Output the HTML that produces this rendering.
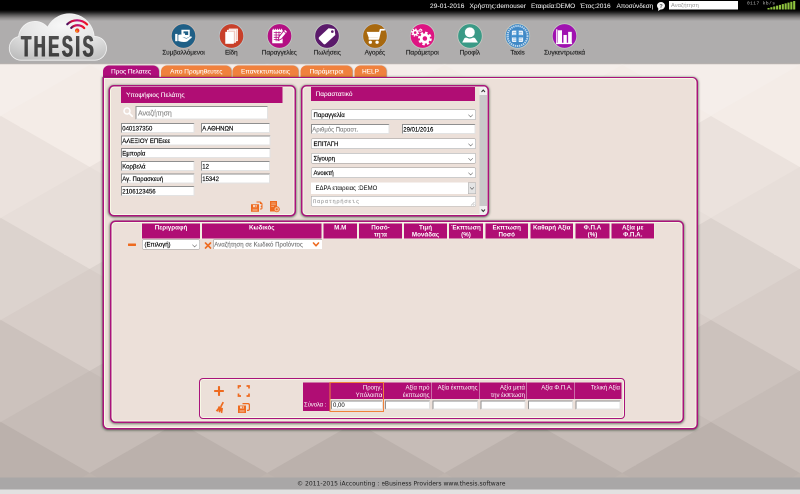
<!DOCTYPE html>
<html lang="el">
<head>
<meta charset="utf-8">
<title>iAccounting - THESIS</title>
<style>
html,body{margin:0;padding:0;width:800px;height:494px;overflow:hidden;background:#d8cfca;}
#stage{position:absolute;left:0;top:0;width:1600px;height:988px;transform:scale(.5);transform-origin:0 0;overflow:hidden;will-change:transform;
  font-family:"Liberation Sans","DejaVu Sans",sans-serif;font-size:12px;color:#000;}
#stage *{box-sizing:border-box;}
.in,.sel,.nav div{-webkit-text-stroke:.3px currentColor;}
#status,.title,.tab{-webkit-text-stroke:.15px currentColor;}
.abs{position:absolute;}
/* background */
#bg{left:0;top:126px;width:1600px;height:830px;background:linear-gradient(#f6efeb 0%,#efe6e1 20%,#e0d6d1 45%,#cfc5c0 70%,#bdb3ae 100%);}
#bgsvg{left:0;top:126px;width:1600px;height:830px;}
/* top */
#topblack{left:0;top:0;width:1600px;height:42px;background:linear-gradient(#000 0,#000 20px,#1c1c1c 24px,#5a5959 30px,#8e8c8c 36px,#afadad 42px);}
#header{left:0;top:42px;width:1600px;height:85px;background:#afadad;}
#hdrshadow{left:0;top:126px;width:1600px;height:4px;background:linear-gradient(rgba(120,115,112,.45),rgba(120,115,112,0));}
#status{left:0;top:0;width:1600px;height:24px;color:#e8e8e8;font-size:13px;line-height:24px;white-space:nowrap;}
#status span{position:absolute;top:0;}
#topsearch{left:1338px;top:2px;width:138px;height:17px;background:#fff;color:#999;font-size:11.5px;line-height:17px;padding-left:4px;}
/* nav */
.nav{position:absolute;top:46px;width:120px;text-align:center;font-size:13px;color:#222;white-space:nowrap;}
.nav svg{display:block;margin:0 auto;width:52px;height:52px;}
.nav div{margin-top:-1px;line-height:15px;letter-spacing:-.2px;}
/* tabs */
.tab{position:absolute;top:131px;height:24px;border-radius:12px 12px 0 0;background:#f0813d;color:#fff;font-size:13px;line-height:23px;text-align:center;white-space:nowrap;box-shadow:1px 0 2px rgba(90,80,70,.55);}
.tab.on{background:#b00d7b;}
/* panels */
.panel{position:absolute;background:#ece0d9;border:3px solid #a9137b;border-radius:11px;box-shadow:inset 0 0 0 2px #f7f9e6,0 1px 4px 1px rgba(30,60,35,.6);}
.title{position:absolute;background:#b00d74;color:#fff;font-size:13px;white-space:nowrap;}
.in{position:absolute;height:20px;background:#fff;border:2px solid;border-color:#8f8f8f #e3e3e3 #e3e3e3 #8f8f8f;font-size:12px;line-height:16px;padding-left:.5px;padding-top:1px;white-space:nowrap;overflow:hidden;color:#000;}
.sel{position:absolute;height:21px;background:#fff;border:1px solid #999;border-radius:3px;font-size:12px;line-height:20px;padding-left:4px;white-space:nowrap;overflow:hidden;color:#000;}
.sel:after{content:"";position:absolute;right:7px;top:6px;width:5.5px;height:5.5px;border-right:1.5px solid #505050;border-bottom:1.5px solid #505050;transform:rotate(45deg);}
.ph{color:#8a8a8a;}
.th{position:absolute;top:447px;height:30px;background:#b00d74;color:#fff;font-weight:bold;font-size:12.5px;line-height:14px;text-align:center;padding-top:1px;}
.tt{position:absolute;top:0;height:33px;color:#fff;font-size:12px;line-height:15px;text-align:right;padding:3px 3px 0 0;border-left:1px solid #e9c9dc;}
.ti{position:absolute;top:36px;height:18px;background:#fff;border:2px solid;border-color:#8f8f8f #e3e3e3 #e3e3e3 #8f8f8f;}
#footer{left:0;top:955px;width:1600px;height:24px;padding-left:5px;background:#a9a7a7;color:#222;font-size:12.1px;line-height:24px;text-align:center;font-family:"DejaVu Sans","Liberation Sans",sans-serif;}
#footer2{left:0;top:979px;width:1600px;height:9px;background:#e2e1e1;}
</style>
</head>
<body>
<div id="stage">
  <div id="bg" class="abs"></div>
  <svg id="bgsvg" class="abs" viewBox="0 0 1600 830" preserveAspectRatio="none" shape-rendering="geometricPrecision"><polygon points="-353.0,-98.0 -175.5,4.0 -353.0,106.0 -530.5,4.0" fill="rgb(245,238,234)"/><polygon points="-175.5,-200.0 2.0,-98.0 -175.5,4.0 -353.0,-98.0" fill="rgb(248,242,238)"/><polygon points="2.0,-98.0 179.5,4.0 2.0,106.0 -175.5,4.0" fill="rgb(245,238,234)"/><polygon points="179.5,-200.0 357.0,-98.0 179.5,4.0 2.0,-98.0" fill="rgb(248,242,238)"/><polygon points="357.0,-98.0 534.5,4.0 357.0,106.0 179.5,4.0" fill="rgb(245,238,234)"/><polygon points="534.5,-200.0 712.0,-98.0 534.5,4.0 357.0,-98.0" fill="rgb(248,242,238)"/><polygon points="712.0,-98.0 889.5,4.0 712.0,106.0 534.5,4.0" fill="rgb(245,238,234)"/><polygon points="889.5,-200.0 1067.0,-98.0 889.5,4.0 712.0,-98.0" fill="rgb(248,242,238)"/><polygon points="1067.0,-98.0 1244.5,4.0 1067.0,106.0 889.5,4.0" fill="rgb(245,238,234)"/><polygon points="1244.5,-200.0 1422.0,-98.0 1244.5,4.0 1067.0,-98.0" fill="rgb(248,242,238)"/><polygon points="1422.0,-98.0 1599.5,4.0 1422.0,106.0 1244.5,4.0" fill="rgb(245,238,234)"/><polygon points="1599.5,-200.0 1777.0,-98.0 1599.5,4.0 1422.0,-98.0" fill="rgb(248,242,238)"/><polygon points="1777.0,-98.0 1954.5,4.0 1777.0,106.0 1599.5,4.0" fill="rgb(245,238,234)"/><polygon points="1954.5,-200.0 2132.0,-98.0 1954.5,4.0 1777.0,-98.0" fill="rgb(248,242,238)"/><polygon points="-353.0,106.0 -175.5,208.0 -353.0,310.0 -530.5,208.0" fill="rgb(235,226,221)"/><polygon points="-175.5,4.0 2.0,106.0 -175.5,208.0 -353.0,106.0" fill="rgb(244,236,231)"/><polygon points="2.0,106.0 179.5,208.0 2.0,310.0 -175.5,208.0" fill="rgb(235,226,221)"/><polygon points="179.5,4.0 357.0,106.0 179.5,208.0 2.0,106.0" fill="rgb(244,236,231)"/><polygon points="357.0,106.0 534.5,208.0 357.0,310.0 179.5,208.0" fill="rgb(235,226,221)"/><polygon points="534.5,4.0 712.0,106.0 534.5,208.0 357.0,106.0" fill="rgb(244,236,231)"/><polygon points="712.0,106.0 889.5,208.0 712.0,310.0 534.5,208.0" fill="rgb(235,226,221)"/><polygon points="889.5,4.0 1067.0,106.0 889.5,208.0 712.0,106.0" fill="rgb(244,236,231)"/><polygon points="1067.0,106.0 1244.5,208.0 1067.0,310.0 889.5,208.0" fill="rgb(235,226,221)"/><polygon points="1244.5,4.0 1422.0,106.0 1244.5,208.0 1067.0,106.0" fill="rgb(244,236,231)"/><polygon points="1422.0,106.0 1599.5,208.0 1422.0,310.0 1244.5,208.0" fill="rgb(235,226,221)"/><polygon points="1599.5,4.0 1777.0,106.0 1599.5,208.0 1422.0,106.0" fill="rgb(244,236,231)"/><polygon points="1777.0,106.0 1954.5,208.0 1777.0,310.0 1599.5,208.0" fill="rgb(235,226,221)"/><polygon points="1954.5,4.0 2132.0,106.0 1954.5,208.0 1777.0,106.0" fill="rgb(244,236,231)"/><polygon points="-353.0,310.0 -175.5,412.0 -353.0,514.0 -530.5,412.0" fill="rgb(220,211,206)"/><polygon points="-175.5,208.0 2.0,310.0 -175.5,412.0 -353.0,310.0" fill="rgb(231,222,217)"/><polygon points="2.0,310.0 179.5,412.0 2.0,514.0 -175.5,412.0" fill="rgb(220,211,206)"/><polygon points="179.5,208.0 357.0,310.0 179.5,412.0 2.0,310.0" fill="rgb(231,222,217)"/><polygon points="357.0,310.0 534.5,412.0 357.0,514.0 179.5,412.0" fill="rgb(220,211,206)"/><polygon points="534.5,208.0 712.0,310.0 534.5,412.0 357.0,310.0" fill="rgb(231,222,217)"/><polygon points="712.0,310.0 889.5,412.0 712.0,514.0 534.5,412.0" fill="rgb(220,211,206)"/><polygon points="889.5,208.0 1067.0,310.0 889.5,412.0 712.0,310.0" fill="rgb(231,222,217)"/><polygon points="1067.0,310.0 1244.5,412.0 1067.0,514.0 889.5,412.0" fill="rgb(220,211,206)"/><polygon points="1244.5,208.0 1422.0,310.0 1244.5,412.0 1067.0,310.0" fill="rgb(231,222,217)"/><polygon points="1422.0,310.0 1599.5,412.0 1422.0,514.0 1244.5,412.0" fill="rgb(220,211,206)"/><polygon points="1599.5,208.0 1777.0,310.0 1599.5,412.0 1422.0,310.0" fill="rgb(231,222,217)"/><polygon points="1777.0,310.0 1954.5,412.0 1777.0,514.0 1599.5,412.0" fill="rgb(220,211,206)"/><polygon points="1954.5,208.0 2132.0,310.0 1954.5,412.0 1777.0,310.0" fill="rgb(231,222,217)"/><polygon points="-353.0,514.0 -175.5,616.0 -353.0,718.0 -530.5,616.0" fill="rgb(204,194,189)"/><polygon points="-175.5,412.0 2.0,514.0 -175.5,616.0 -353.0,514.0" fill="rgb(215,205,200)"/><polygon points="2.0,514.0 179.5,616.0 2.0,718.0 -175.5,616.0" fill="rgb(204,194,189)"/><polygon points="179.5,412.0 357.0,514.0 179.5,616.0 2.0,514.0" fill="rgb(215,205,200)"/><polygon points="357.0,514.0 534.5,616.0 357.0,718.0 179.5,616.0" fill="rgb(204,194,189)"/><polygon points="534.5,412.0 712.0,514.0 534.5,616.0 357.0,514.0" fill="rgb(215,205,200)"/><polygon points="712.0,514.0 889.5,616.0 712.0,718.0 534.5,616.0" fill="rgb(204,194,189)"/><polygon points="889.5,412.0 1067.0,514.0 889.5,616.0 712.0,514.0" fill="rgb(215,205,200)"/><polygon points="1067.0,514.0 1244.5,616.0 1067.0,718.0 889.5,616.0" fill="rgb(204,194,189)"/><polygon points="1244.5,412.0 1422.0,514.0 1244.5,616.0 1067.0,514.0" fill="rgb(215,205,200)"/><polygon points="1422.0,514.0 1599.5,616.0 1422.0,718.0 1244.5,616.0" fill="rgb(204,194,189)"/><polygon points="1599.5,412.0 1777.0,514.0 1599.5,616.0 1422.0,514.0" fill="rgb(215,205,200)"/><polygon points="1777.0,514.0 1954.5,616.0 1777.0,718.0 1599.5,616.0" fill="rgb(204,194,189)"/><polygon points="1954.5,412.0 2132.0,514.0 1954.5,616.0 1777.0,514.0" fill="rgb(215,205,200)"/><polygon points="-353.0,718.0 -175.5,820.0 -353.0,922.0 -530.5,820.0" fill="rgb(187,177,172)"/><polygon points="-175.5,616.0 2.0,718.0 -175.5,820.0 -353.0,718.0" fill="rgb(198,188,183)"/><polygon points="2.0,718.0 179.5,820.0 2.0,922.0 -175.5,820.0" fill="rgb(187,177,172)"/><polygon points="179.5,616.0 357.0,718.0 179.5,820.0 2.0,718.0" fill="rgb(198,188,183)"/><polygon points="357.0,718.0 534.5,820.0 357.0,922.0 179.5,820.0" fill="rgb(187,177,172)"/><polygon points="534.5,616.0 712.0,718.0 534.5,820.0 357.0,718.0" fill="rgb(198,188,183)"/><polygon points="712.0,718.0 889.5,820.0 712.0,922.0 534.5,820.0" fill="rgb(187,177,172)"/><polygon points="889.5,616.0 1067.0,718.0 889.5,820.0 712.0,718.0" fill="rgb(198,188,183)"/><polygon points="1067.0,718.0 1244.5,820.0 1067.0,922.0 889.5,820.0" fill="rgb(187,177,172)"/><polygon points="1244.5,616.0 1422.0,718.0 1244.5,820.0 1067.0,718.0" fill="rgb(198,188,183)"/><polygon points="1422.0,718.0 1599.5,820.0 1422.0,922.0 1244.5,820.0" fill="rgb(187,177,172)"/><polygon points="1599.5,616.0 1777.0,718.0 1599.5,820.0 1422.0,718.0" fill="rgb(198,188,183)"/><polygon points="1777.0,718.0 1954.5,820.0 1777.0,922.0 1599.5,820.0" fill="rgb(187,177,172)"/><polygon points="1954.5,616.0 2132.0,718.0 1954.5,820.0 1777.0,718.0" fill="rgb(198,188,183)"/><polygon points="-353.0,922.0 -175.5,1024.0 -353.0,1126.0 -530.5,1024.0" fill="rgb(186,176,172)"/><polygon points="-175.5,820.0 2.0,922.0 -175.5,1024.0 -353.0,922.0" fill="rgb(190,180,174)"/><polygon points="2.0,922.0 179.5,1024.0 2.0,1126.0 -175.5,1024.0" fill="rgb(186,176,172)"/><polygon points="179.5,820.0 357.0,922.0 179.5,1024.0 2.0,922.0" fill="rgb(190,180,174)"/><polygon points="357.0,922.0 534.5,1024.0 357.0,1126.0 179.5,1024.0" fill="rgb(186,176,172)"/><polygon points="534.5,820.0 712.0,922.0 534.5,1024.0 357.0,922.0" fill="rgb(190,180,174)"/><polygon points="712.0,922.0 889.5,1024.0 712.0,1126.0 534.5,1024.0" fill="rgb(186,176,172)"/><polygon points="889.5,820.0 1067.0,922.0 889.5,1024.0 712.0,922.0" fill="rgb(190,180,174)"/><polygon points="1067.0,922.0 1244.5,1024.0 1067.0,1126.0 889.5,1024.0" fill="rgb(186,176,172)"/><polygon points="1244.5,820.0 1422.0,922.0 1244.5,1024.0 1067.0,922.0" fill="rgb(190,180,174)"/><polygon points="1422.0,922.0 1599.5,1024.0 1422.0,1126.0 1244.5,1024.0" fill="rgb(186,176,172)"/><polygon points="1599.5,820.0 1777.0,922.0 1599.5,1024.0 1422.0,922.0" fill="rgb(190,180,174)"/><polygon points="1777.0,922.0 1954.5,1024.0 1777.0,1126.0 1599.5,1024.0" fill="rgb(186,176,172)"/><polygon points="1954.5,820.0 2132.0,922.0 1954.5,1024.0 1777.0,922.0" fill="rgb(190,180,174)"/><polygon points="-353.0,1126.0 -175.5,1228.0 -353.0,1330.0 -530.5,1228.0" fill="rgb(186,176,172)"/><polygon points="-175.5,1024.0 2.0,1126.0 -175.5,1228.0 -353.0,1126.0" fill="rgb(190,180,174)"/><polygon points="2.0,1126.0 179.5,1228.0 2.0,1330.0 -175.5,1228.0" fill="rgb(186,176,172)"/><polygon points="179.5,1024.0 357.0,1126.0 179.5,1228.0 2.0,1126.0" fill="rgb(190,180,174)"/><polygon points="357.0,1126.0 534.5,1228.0 357.0,1330.0 179.5,1228.0" fill="rgb(186,176,172)"/><polygon points="534.5,1024.0 712.0,1126.0 534.5,1228.0 357.0,1126.0" fill="rgb(190,180,174)"/><polygon points="712.0,1126.0 889.5,1228.0 712.0,1330.0 534.5,1228.0" fill="rgb(186,176,172)"/><polygon points="889.5,1024.0 1067.0,1126.0 889.5,1228.0 712.0,1126.0" fill="rgb(190,180,174)"/><polygon points="1067.0,1126.0 1244.5,1228.0 1067.0,1330.0 889.5,1228.0" fill="rgb(186,176,172)"/><polygon points="1244.5,1024.0 1422.0,1126.0 1244.5,1228.0 1067.0,1126.0" fill="rgb(190,180,174)"/><polygon points="1422.0,1126.0 1599.5,1228.0 1422.0,1330.0 1244.5,1228.0" fill="rgb(186,176,172)"/><polygon points="1599.5,1024.0 1777.0,1126.0 1599.5,1228.0 1422.0,1126.0" fill="rgb(190,180,174)"/><polygon points="1777.0,1126.0 1954.5,1228.0 1777.0,1330.0 1599.5,1228.0" fill="rgb(186,176,172)"/><polygon points="1954.5,1024.0 2132.0,1126.0 1954.5,1228.0 1777.0,1126.0" fill="rgb(190,180,174)"/></svg>
  <div id="topblack" class="abs"></div>
  <div id="header" class="abs"></div>
  <div id="hdrshadow" class="abs"></div>

  <!-- tabs -->
  <div class="tab on" style="left:206px;width:112px;">Προς Πελατες</div>
  <div class="tab" style="left:322px;width:141px;">Απο Προμηθευτες</div>
  <div class="tab" style="left:465px;width:132px;">Επανεκτυπωσεις</div>
  <div class="tab" style="left:601px;width:104px;">Παράμετροι</div>
  <div class="tab" style="left:709px;width:64px;">HELP</div>

  <!-- outer panel -->
  <div class="panel" id="outer" style="left:205px;top:154px;width:1191px;height:705px;border-radius:0 11px 11px 11px;border-top-width:2px;"></div>

  <!-- customer panel -->
  <div class="panel" id="cust" style="left:217px;top:170px;width:375px;height:263px;">
  </div>
  <div class="title" style="left:242px;top:174px;width:323px;height:32px;line-height:32px;padding-left:10px;">Υποψήφιος Πελάτης</div>
  <svg class="abs" style="left:245px;top:213px;width:22px;height:22px;" viewBox="0 0 22 22"><circle cx="9" cy="9" r="6" fill="none" stroke="#fff" stroke-width="3"/><path d="M13.5 13.5 L19.5 19.5" stroke="#fff" stroke-width="3.4" stroke-linecap="round"/></svg>
  <div class="in ph" style="left:271px;top:212px;width:265px;height:27px;font-size:14px;line-height:22px;padding-left:3px;">Αναζήτηση</div>
  <div class="in" style="left:242px;top:246px;width:147px;">040137350</div>
  <div class="in" style="left:402px;top:246px;width:138px;">Α ΑΘΗΝΩΝ</div>
  <div class="in" style="left:242px;top:271px;width:299px;">ΑΛΕΞΙΟΥ ΕΠΕεεε</div>
  <div class="in" style="left:242px;top:296px;width:299px;">Εμπορία</div>
  <div class="in" style="left:242px;top:322px;width:147px;">Κορβελά</div>
  <div class="in" style="left:402px;top:322px;width:138px;">12</div>
  <div class="in" style="left:242px;top:347px;width:147px;">Αγ. Παρασκευή</div>
  <div class="in" style="left:402px;top:347px;width:138px;">15342</div>
  <div class="in" style="left:242px;top:372px;width:147px;">2106123456</div>


  <!-- customer panel icons -->
  <svg class="abs" style="left:501px;top:402px;width:26px;height:22px;" viewBox="0 0 26 22"><path d="M12 1 H20 L24 5 V14 Q24 17 21 17 H19 V15 H21 Q22 15 22 14 V6 H19 V3 H12Z" fill="#ee6a1f"/><path d="M20 11 L23 8 V14 Z" fill="#ee6a1f"/><path d="M1 6.5 H17 V21.5 H1Z" fill="#ee6a1f"/><rect x="5" y="8" width="8" height="4.5" fill="#f6d4c0"/><rect x="9.6" y="8.6" width="2.2" height="3.3" fill="#ee6a1f"/><rect x="4" y="15.5" width="10" height="4.5" fill="#f29a66"/></svg>
  <svg class="abs" style="left:539px;top:401px;width:22px;height:24px;" viewBox="0 0 22 24"><path d="M1 1 H15 V22 H1Z" fill="#ee6a1f"/><path d="M3.5 5 H12.5 M3.5 8.5 H12.5 M3.5 12 H9" stroke="#f4b890" stroke-width="1.4"/><circle cx="14.5" cy="17.5" r="5.3" fill="#f4b890" stroke="#ee6a1f" stroke-width="1.6"/><circle cx="14.5" cy="17.5" r="2" fill="#ee6a1f"/></svg>

  <!-- document panel -->
  <div class="panel" id="doc" style="left:602px;top:170px;width:376px;height:263px;"></div>
  <div class="title" style="left:622px;top:174px;width:328px;height:28px;line-height:28px;padding-left:9px;">Παραστατικό</div>
  <div class="sel" style="left:622px;top:219px;width:330px;">Παραγγελία</div>
  <div class="in ph" style="left:622px;top:248px;width:157px;height:20px;">Αριθμός Παραστ.</div>
  <div class="in" style="left:804px;top:248px;width:147px;height:20px;">29/01/2016</div>
  <div class="sel" style="left:622px;top:277px;width:330px;">ΕΠΙΤΑΓΗ</div>
  <div class="sel" style="left:622px;top:306px;width:330px;">Σίγουρη</div>
  <div class="sel" style="left:622px;top:335px;width:330px;">Ανοικτή</div>
  <div class="abs" style="left:622px;top:365px;width:330px;height:23px;background:#fff;font-size:12px;line-height:23px;padding-left:9px;">ΕΔΡΑ εταιρειας :DEMO</div>
  <div class="abs" style="left:936px;top:365px;width:16px;height:23px;background:#e4e4e4;border:1px solid #adadad;"><div style="position:absolute;left:4px;top:6px;width:6px;height:6px;border-right:1.6px solid #444;border-bottom:1.6px solid #444;transform:rotate(45deg);"></div></div>
  <div class="in ph" style="left:622px;top:392px;width:330px;height:21px;font-family:'Liberation Mono','DejaVu Sans Mono',monospace;font-size:11px;letter-spacing:1.2px;line-height:18px;padding-left:3px;color:#a6a6a6;border-width:1px;border-radius:3px;border-color:#9a9a9a #b8b8b8 #b8b8b8 #9a9a9a;">Παρατηρήσεις</div>
  <svg class="abs" style="left:940px;top:402px;width:10px;height:10px;" viewBox="0 0 10 10"><path d="M9 2 L2 9 M9 6 L6 9" stroke="#b5b5b5" stroke-width="1.2"/></svg>
  <!-- scrollbar -->
  <div class="abs" style="left:959px;top:173px;width:15px;height:257px;background:#f1f1f1;border-radius:0 6px 6px 0;"></div>
  <div class="abs" style="left:959px;top:190px;width:15px;height:222px;background:#c9c9c9;"></div>
  <svg class="abs" style="left:959px;top:173px;width:15px;height:17px;" viewBox="0 0 15 17"><path d="M4 11 L7.5 7 L11 11" fill="none" stroke="#333" stroke-width="2"/></svg>
  <svg class="abs" style="left:959px;top:413px;width:15px;height:17px;" viewBox="0 0 15 17"><path d="M4 6 L7.5 10 L11 6" fill="none" stroke="#333" stroke-width="2"/></svg>

  <!-- grid panel -->
  <div class="panel" id="grid" style="left:220px;top:441px;width:1148px;height:405px;"></div>
  <div class="abs" style="left:283px;top:446px;width:1026px;height:32px;background:#f3eee2;"></div>
  <div class="th" style="left:284px;width:116px;">Περιγραφή</div>
  <div class="th" style="left:404px;width:239px;">Κωδικός</div>
  <div class="th" style="left:647px;width:67px;">Μ.Μ</div>
  <div class="th" style="left:718px;width:86px;">Ποσό-<br>τητα</div>
  <div class="th" style="left:808px;width:86px;">Τιμή<br>Μονάδας</div>
  <div class="th" style="left:898px;width:68px;">Έκπτωση<br>(%)</div>
  <div class="th" style="left:971px;width:85px;">Εκπτωση<br>Ποσό</div>
  <div class="th" style="left:1061px;width:85px;">Καθαρή Αξία</div>
  <div class="th" style="left:1151px;width:68px;">Φ.Π.Α<br>(%)</div>
  <div class="th" style="left:1223px;width:85px;">Αξία με<br>Φ.Π.Α.</div>
  <!-- row -->
  <div class="abs" style="left:256px;top:487px;width:16px;height:5px;background:#ee6a1f;border-radius:1px;"></div>
  <div class="sel" style="left:284px;top:479px;width:116px;height:20px;line-height:18px;">(Επιλογή)</div>
  <svg class="abs" style="left:409px;top:484px;width:14px;height:14px;" viewBox="0 0 14 14"><path d="M2 2 L12 12 M12 2 L2 12" stroke="#ee6a1f" stroke-width="3.2" stroke-linecap="round"/></svg>
  <div class="in ph" style="left:427px;top:479px;width:217px;height:19px;border-width:1px 0 0 1px;border-color:#8f8f8f;font-size:12px;line-height:16px;letter-spacing:.1px;color:#7a7a7a;">Αναζήτηση σε Κωδικό Προϊόντος</div>
  <svg class="abs" style="left:624px;top:483px;width:16px;height:12px;" viewBox="0 0 16 12"><path d="M3 3 L8 8.5 L13 3" fill="none" stroke="#ee6a1f" stroke-width="3.2" stroke-linecap="round" stroke-linejoin="round"/></svg>

  <!-- bottom toolbar -->
  <div class="abs" id="tool" style="left:398px;top:756px;width:852px;height:82px;border:2px solid #a9137b;border-radius:8px;box-shadow:inset 0 0 0 2px #f7f9e6;"></div>
  <!-- icons -->
  <svg class="abs" style="left:428px;top:772px;width:20px;height:20px;" viewBox="0 0 20 20"><path d="M10 2 V18 M2 10 H18" stroke="#ee6a1f" stroke-width="4.2" stroke-linecap="round"/></svg>
  <svg class="abs" style="left:475px;top:770px;width:25px;height:24px;" viewBox="0 0 25 24"><path d="M2 7 V2 H7 M18 2 H23 V7 M23 17 V22 H18 M7 22 H2 V17" fill="none" stroke="#ee6a1f" stroke-width="3.4"/></svg>
  <svg class="abs" style="left:429px;top:803px;width:22px;height:24px;" viewBox="0 0 22 24"><path d="M16 0.5 L19 2 L14 11.5 L11 10 Z" fill="#ee6a1f"/><path d="M8.5 9 L17 13.5 L15.5 23.5 L12.5 22.5 L12.5 18.5 L10.5 22 L8 21 L9 17 L6 20.5 L2.5 18.5 Q7 14 8.5 9Z" fill="#ee6a1f"/></svg>
  <svg class="abs" style="left:475px;top:805px;width:26px;height:22px;" viewBox="0 0 26 22"><path d="M10 1 H21 Q25 1 25 5 V13 Q25 17 21 17 H19 V14.5 H21 Q22.5 14.5 22.5 13 V5 Q22.5 3.5 21 3.5 H10Z" fill="#ee6a1f"/><path d="M1 6 H17 V21 H1Z" fill="#ee6a1f"/><rect x="5" y="7.5" width="8" height="4.5" fill="#f3d9c8"/><rect x="9.5" y="8" width="2.2" height="3.4" fill="#ee6a1f"/><rect x="4" y="15" width="10" height="4.5" fill="#f19a66"/></svg>

  <!-- totals table -->
  <div class="abs" id="tot" style="left:606px;top:765px;width:637px;height:57px;">
    <div class="abs" style="left:0;top:0;width:637px;height:33px;background:#b00d74;"></div>
    <div class="abs" style="left:0;top:33px;width:53px;height:24px;background:#b00d74;color:#fff;font-size:12px;line-height:22px;padding-left:2px;white-space:nowrap;letter-spacing:-.2px;">Σύνολα :</div>
    <div class="tt" style="left:53px;width:108px;border-left:0;">Προηγ.<br>Υπόλοιπο</div>
    <div class="tt" style="left:161px;width:95px;">Αξία πρό<br>έκπτωσης</div>
    <div class="tt" style="left:256px;width:96px;">Αξία έκπτωσης</div>
    <div class="tt" style="left:352px;width:95px;">Αξία μετά<br>την έκπτωση</div>
    <div class="tt" style="left:447px;width:95px;">Αξία Φ.Π.Α.</div>
    <div class="tt" style="left:542px;width:95px;">Τελική Αξία</div>
    <div class="ti" style="left:56px;width:103px;font-size:12px;line-height:15px;padding-left:2px;">0,00</div>
    <div class="ti" style="left:164px;width:90px;"></div>
    <div class="ti" style="left:259px;width:91px;"></div>
    <div class="ti" style="left:355px;width:90px;"></div>
    <div class="ti" style="left:450px;width:90px;"></div>
    <div class="ti" style="left:545px;width:90px;"></div>
    <div class="abs" style="left:53px;top:-1px;width:109px;height:60px;border:2px solid #f0823a;"></div>
  </div>


  <!-- logo -->
  <svg class="abs" id="logo" style="left:0;top:0;width:240px;height:130px;" viewBox="0 0 240 130">
    <defs>
      <radialGradient id="cg" cx="0.55" cy="0.25" r="0.85"><stop offset="0" stop-color="#f8f8f8"/><stop offset=".5" stop-color="#e4e4e4"/><stop offset="1" stop-color="#bdbdbd"/></radialGradient>
      <linearGradient id="wg" x1="0" y1="0" x2="1" y2="0"><stop offset="0" stop-color="#4a1060"/><stop offset=".25" stop-color="#e0103a"/><stop offset=".5" stop-color="#b01080"/><stop offset=".75" stop-color="#e01050"/><stop offset="1" stop-color="#f01418"/></linearGradient>
      <filter id="thick" x="-5%" y="-5%" width="110%" height="110%"><feOffset in="SourceGraphic" dx="-1.3" dy="0" result="a"/><feOffset in="SourceGraphic" dx="1.3" dy="0" result="b"/><feMerge><feMergeNode in="a"/><feMergeNode in="b"/><feMergeNode in="SourceGraphic"/></feMerge></filter><linearGradient id="tg" x1="0" y1="0" x2="0" y2="1"><stop offset="0" stop-color="#555"/><stop offset="1" stop-color="#383838"/></linearGradient>
    </defs>
    <g transform="scale(2)" fill="url(#cg)" stroke="#f4f4f4" stroke-width=".8">
      <path d="M21.5 60.2 A12 12 0 0 1 18.6 36.5 A16.5 16.5 0 0 1 47.6 27.2 A24.7 24.7 0 0 1 94.2 36.4 A11.9 11.9 0 1 1 95 60.2 Z"/>
    </g>
    <g filter="url(#thick)"><text transform="translate(42.2,113) scale(.56,1)" font-family="Liberation Sans, sans-serif" font-weight="bold" font-size="59" fill="url(#tg)" letter-spacing="9.2">THESIS</text></g>
    <g fill="none" stroke="url(#wg)" stroke-width="4.4" stroke-linecap="round">
      <path d="M142.5 55.8 A18.2 18.2 0 0 1 168.5 56.2"/>
      <path d="M134.6 48.4 A28.4 28.4 0 0 1 174.2 49"/>
    </g>
    <circle cx="154.4" cy="61.2" r="4.4" fill="#ee3a24"/><circle cx="153.2" cy="62.6" r="2.2" fill="#f6a21c"/>
  </svg>
  <!-- nav -->
  <div class="nav" style="left:307px;"><svg viewBox="0 0 50 50"><circle cx="25" cy="25" r="23.6" fill="#1f5f86" stroke="#c9b8b0" stroke-width="1.6"/><g transform="translate(1 1)"><path d="M8 20 H12.5 V34 H8Z" fill="#fff"/><path d="M14 22 Q18 20 22 22 L27 24 Q29 25 28 27 L22 27 L30 29 L37 25 Q40 24 40 27 L31 34.5 Q24 37 14 33.5Z" fill="#fff"/><path d="M20 12 H36 V25 L30 28 L20 25Z" fill="#fff"/><path d="M24 15 H33 V22 H27 V19 H24Z" fill="#1f5f86"/></g></svg><div>Συμβαλλόμενοι</div></div>
  <div class="nav" style="left:402.5px;"><svg viewBox="0 0 50 50"><circle cx="25" cy="25" r="23.6" fill="#c8402a" stroke="#b9c6cc" stroke-width="1.6"/><g transform="translate(1 1)"><path d="M19.5 10.5 H35.5 V33 H19.5Z" fill="#f0c9c1" stroke="#fff" stroke-width="1.5"/><path d="M16 13 H32 V36 H16Z" fill="#f0c9c1" stroke="#fff" stroke-width="1.5"/><path d="M12 16 H28.5 V39 H12Z" fill="#fff"/></g></svg><div>Είδη</div></div>
  <div class="nav" style="left:498.5px;"><svg viewBox="0 0 50 50"><circle cx="25" cy="25" r="23.6" fill="#b40f83" stroke="#c4c9c2" stroke-width="1.6"/><g transform="translate(1 1)"><path d="M10 12 H30 V38 H10Z" fill="#fff"/><path d="M13 17.5 H27 M13 22 H27 M13 26.5 H27 M13 31 H24 M17.5 15 V34 M23 15 V34" stroke="#b40f83" stroke-width="1.5"/><path d="M12 10 V14 M16 10 V14 M20 10 V14 M24 10 V14 M28 10 V14" stroke="#fff" stroke-width="1.6"/><path d="M34.5 11 L39.5 16 L28 29.5 L21 32.5 L23.5 25Z" fill="#fff" stroke="#b40f83" stroke-width="1.7"/><path d="M32 14.5 L36.5 19" stroke="#b40f83" stroke-width="1.4"/></g></svg><div>Παραγγελίες</div></div>
  <div class="nav" style="left:594.4px;"><svg viewBox="0 0 50 50"><circle cx="25" cy="25" r="23.6" fill="#5b1a6b" stroke="#c4c9c2" stroke-width="1.6"/><g transform="translate(1 1)"><path d="M27 9 L38.5 10.5 L40 22 L21 39.5 Q19 41 17 39 L8.5 30 Q7 28 9 26Z" fill="#fff"/><circle cx="34.3" cy="15.5" r="2.5" fill="#5b1a6b"/></g></svg><div>Πωλήσεις</div></div>
  <div class="nav" style="left:689.5px;"><svg viewBox="0 0 50 50"><circle cx="25" cy="25" r="23.6" fill="#a8690f" stroke="#b9bcc6" stroke-width="1.6"/><g transform="translate(1 1)"><g transform="translate(48 0) scale(-1 1)"><path d="M6.5 12 H13.5 L17.5 29.5 H35" fill="none" stroke="#fff" stroke-width="3.2" stroke-linejoin="round" stroke-linecap="round"/><path d="M15 16 H40 L36 27.5 H17.6Z" fill="#fff"/><circle cx="20" cy="36" r="3.2" fill="#fff"/><circle cx="33" cy="36" r="3.2" fill="#fff"/></g></g></svg><div>Αγορές</div></div>
  <div class="nav" style="left:784.5px;"><svg viewBox="0 0 50 50"><circle cx="25" cy="25" r="23.6" fill="#de1482" stroke="#c4c9c2" stroke-width="1.6"/><g transform="translate(1 1)"><g transform="translate(-1 -1)"><circle cx="10.9" cy="18.4" r="6.5" fill="none" stroke="#fff" stroke-width="2.6" stroke-dasharray="2.8 2.305"/><circle cx="10.9" cy="18.4" r="5.6" fill="#fff"/><circle cx="10.9" cy="18.4" r="2.5" fill="#de1482"/><circle cx="21.4" cy="14" r="2.8" fill="none" stroke="#fff" stroke-width="1.4" stroke-dasharray="1.5 1.43"/><circle cx="21.4" cy="14" r="2.4" fill="#fff"/><circle cx="21.4" cy="14" r="1.1" fill="#de1482"/><circle cx="29.6" cy="29.8" r="11.3" fill="none" stroke="#fff" stroke-width="3.8" stroke-dasharray="4.8 4.075"/><circle cx="29.6" cy="29.8" r="9.8" fill="#fff"/><circle cx="29.6" cy="29.8" r="4.3" fill="#de1482"/></g></g></svg><div>Παράμετροι</div></div>
  <div class="nav" style="left:879.5px;"><svg viewBox="0 0 50 50"><circle cx="25" cy="25" r="23.6" fill="#3a9a86" stroke="#c4c9c2" stroke-width="1.6"/><g transform="translate(1 1)"><g transform="translate(-1 -1)"><path d="M10 37.4 L14.2 29.4 Q16 27.6 19 28.4 Q24.5 31.5 30 28.4 Q33 27.6 34.8 29.4 L40.3 37.4 Z" fill="#fff"/><circle cx="24.6" cy="18" r="10" fill="#fff" stroke="#3a9a86" stroke-width="0.8"/></g></g></svg><div>Προφίλ</div></div>
  <div class="nav" style="left:975px;"><svg viewBox="0 0 50 50"><circle cx="25" cy="25" r="23.6" fill="#4189c6" stroke="#c4c9c2" stroke-width="1.6"/><g transform="translate(1 1)"><circle cx="24" cy="24" r="19.3" fill="none" stroke="#bcd8ef" stroke-width="3.8" stroke-dasharray="2.6 1.5"/><rect x="13.2" y="13.6" width="21.6" height="22" rx="2.2" fill="#edf4fb"/><path d="M15 17.5 H21 M27 17.5 H33 M15 20.5 H21 M27 20.5 H33 M15 29.5 H21 M27 29.5 H33 M15 32.5 H21 M27 32.5 H33" stroke="#8dbbe2" stroke-width="1.3"/><path d="M24 13.6 V35.6 M13.2 24.6 H34.8" stroke="#3f8fce" stroke-width="4.8"/></g></svg><div>Taxis</div></div>
  <div class="nav" style="left:1069px;"><svg viewBox="0 0 50 50"><circle cx="25" cy="25" r="23.6" fill="#a012b0" stroke="#c4c9c2" stroke-width="1.6"/><g transform="translate(1 1)"><rect x="8" y="11" width="2.2" height="28.6" fill="#fff"/><rect x="8" y="37" width="30.6" height="2.6" fill="#fff"/><rect x="11.2" y="13" width="8" height="24.5" fill="#fff"/><rect x="22" y="22" width="6.4" height="15.5" fill="#fff"/><rect x="31" y="16" width="7" height="21.5" fill="#fff"/></g></svg><div>Συγκεντρωτικά</div></div>

  <!-- status bar -->
  <div id="status" class="abs">
    <span style="left:860px;letter-spacing:.25px;">29-01-2016</span>
    <span style="left:939px;letter-spacing:.1px;">Χρήστης:demouser</span>
    <span style="left:1062px;letter-spacing:-.15px;">Εταιρεία:DEMO</span>
    <span style="left:1160px;">Έτος:2016</span>
    <span style="left:1233px;letter-spacing:-.15px;">Αποσύνδεση</span>
  </div>
  <svg class="abs" style="left:1313px;top:3px;width:18px;height:20px;" viewBox="0 0 18 20"><ellipse cx="9" cy="8.5" rx="8" ry="7.5" fill="#f4f4f4"/><path d="M4 13 L3 19 L10 15Z" fill="#f4f4f4"/><text x="9" y="12.5" font-family="Liberation Sans, sans-serif" font-size="11" font-weight="bold" fill="#555" text-anchor="middle">?</text></svg>
  <div id="topsearch" class="abs">Αναζήτηση</div>
  <div class="abs" style="left:1494px;top:3px;font-size:9px;color:#bdbdbd;letter-spacing:.9px;font-family:'Liberation Mono',monospace;line-height:9px;white-space:nowrap;">0117 kb/s</div>
  <svg class="abs" style="left:1535px;top:2px;width:57px;height:18px;" viewBox="0 0 57 18">
    <g fill="#8fc23f"><rect x="0.0" y="14.0" width="4.2" height="3.0"/><rect x="5.7" y="12.4" width="4.2" height="4.5"/><rect x="11.4" y="10.9" width="4.2" height="6.1"/><rect x="17.1" y="9.3" width="4.2" height="7.7"/><rect x="22.8" y="7.8" width="4.2" height="9.2"/><rect x="28.5" y="6.2" width="4.2" height="10.8"/><rect x="34.2" y="4.7" width="4.2" height="12.3"/><rect x="39.9" y="3.2" width="4.2" height="13.8"/><rect x="45.6" y="1.6" width="4.2" height="15.4"/><rect x="51.3" y="0.0" width="4.2" height="17.0"/></g>
  </svg>
  <div id="footer" class="abs">© 2011-2015 iAccounting : eBusiness Providers www.thesis.software</div>
  <div id="footer2" class="abs"></div>
</div>
</body>
</html>
